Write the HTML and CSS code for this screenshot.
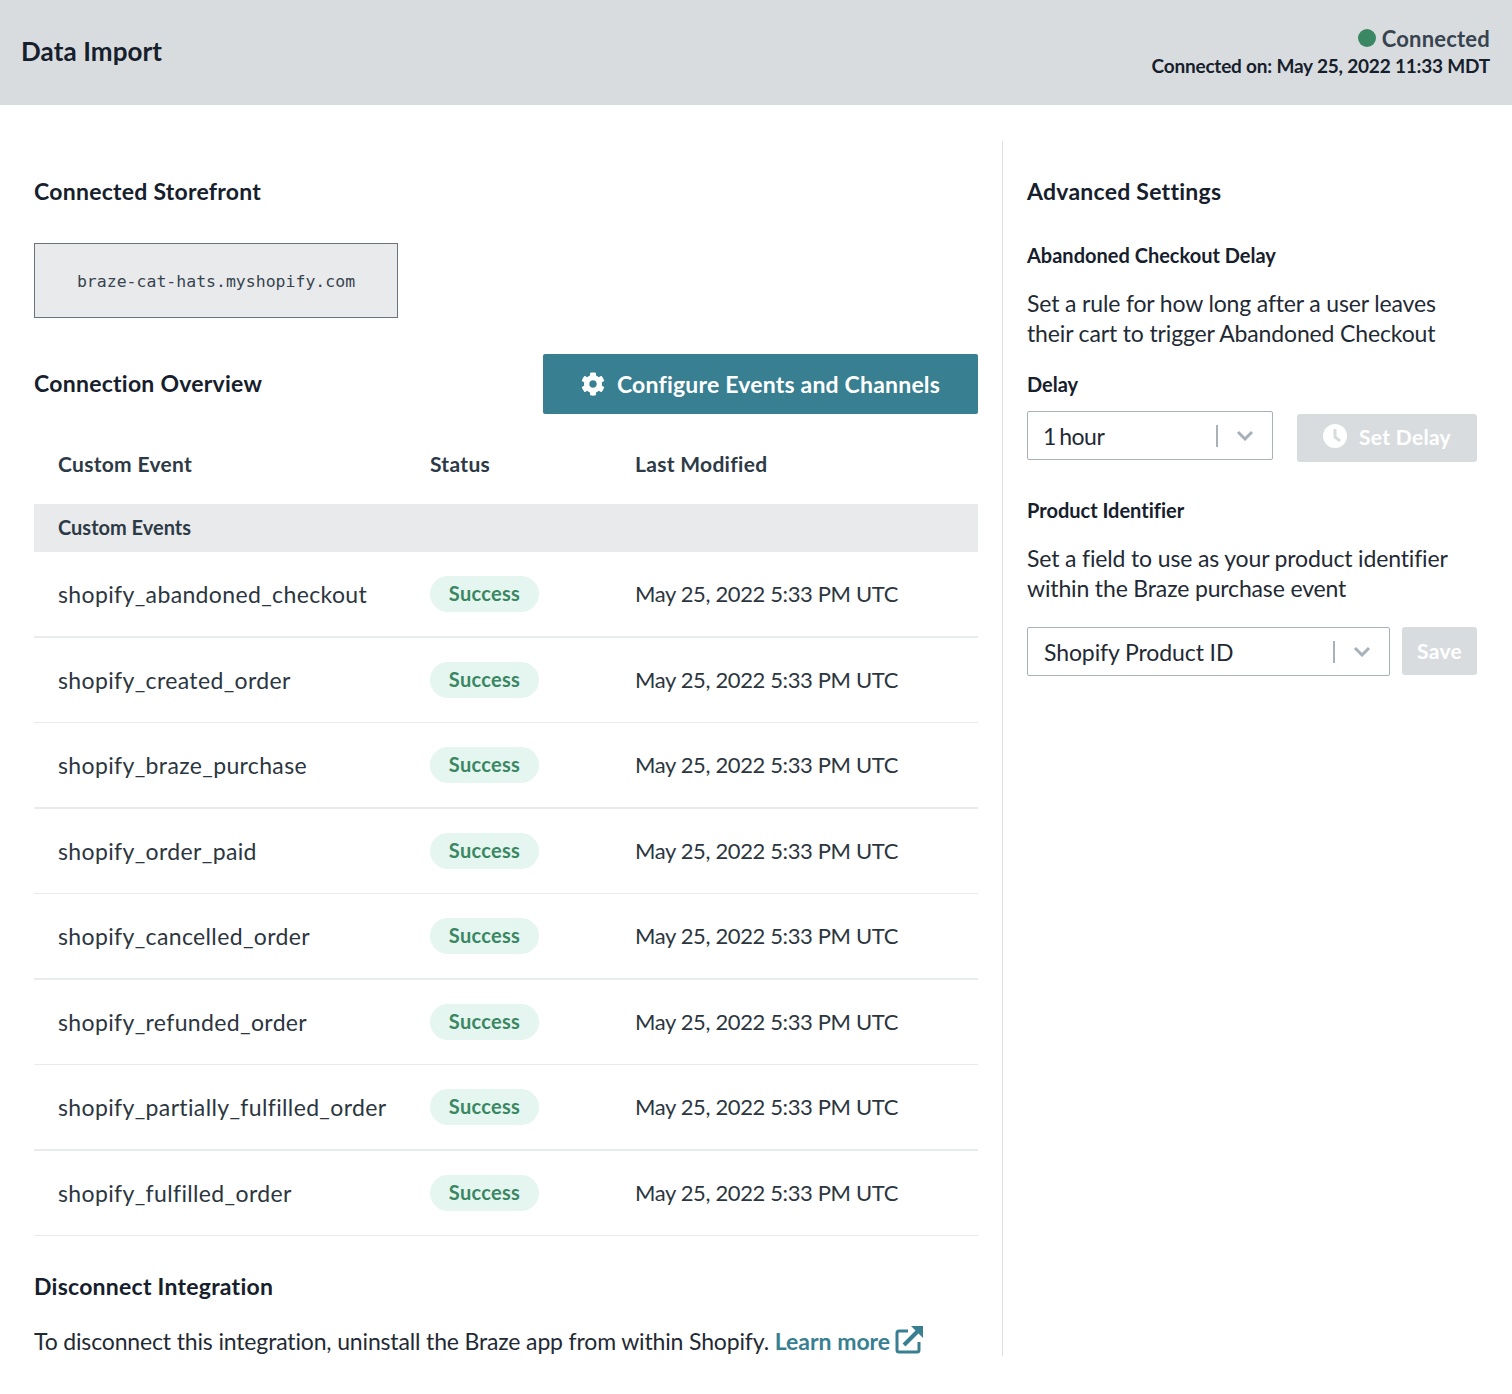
FILE: index.html

```html
<!DOCTYPE html>
<html>
<head>
    <title>Data Import</title>
    <link rel="stylesheet" href="styles.css">
</head>
<body>
    <div class="topbar">
        <h1 class="page-title">Data Import</h1>
        <div class="conn">
            <div class="conn-status"><span class="dot"></span>Connected</div>
            <div class="conn-date">Connected on: May 25, 2022 11:33 MDT</div>
        </div>
    </div>

    <div class="content">
        <div class="left">
            <h2 class="heading">Connected Storefront</h2>
            <div class="store-box">braze-cat-hats.myshopify.com</div>

            <div class="overview-head">
                <h2 class="heading">Connection Overview</h2>
                <button type="button" class="btn-primary">
                    <svg class="gear" viewBox="0 0 512 512"><path fill="#fff" d="M487.4 315.7l-42.6-24.6c4.3-23.2 4.3-47 0-70.2l42.6-24.6c4.9-2.8 7.1-8.6 5.5-14-11.1-35.6-30-67.8-54.7-94.6-3.8-4.1-10-5.1-14.8-2.3L380.8 110c-17.9-15.4-38.5-27.3-60.8-35.1V25.8c0-5.6-3.9-10.5-9.4-11.7-36.7-8.2-74.3-7.8-109.2 0-5.5 1.2-9.4 6.1-9.4 11.7V75c-22.2 7.9-42.8 19.8-60.8 35.1L88.7 85.5c-4.9-2.8-11-1.9-14.8 2.3-24.7 26.7-43.6 58.9-54.7 94.6-1.7 5.4.6 11.2 5.5 14L67.3 221c-4.3 23.2-4.3 47 0 70.2l-42.6 24.6c-4.9 2.8-7.1 8.6-5.5 14 11.1 35.6 30 67.8 54.7 94.6 3.8 4.1 10 5.1 14.8 2.3l42.6-24.6c17.9 15.4 38.5 27.3 60.8 35.1v49.2c0 5.6 3.9 10.5 9.4 11.7 36.7 8.2 74.3 7.8 109.2 0 5.5-1.2 9.4-6.1 9.4-11.7v-49.2c22.2-7.9 42.8-19.8 60.8-35.1l42.6 24.6c4.9 2.8 11 1.9 14.8-2.3 24.7-26.7 43.6-58.9 54.7-94.6 1.5-5.5-.7-11.3-5.6-14.1zM256 336c-44.1 0-80-35.9-80-80s35.9-80 80-80 80 35.9 80 80-35.9 80-80 80z"/></svg>
                    Configure Events and Channels
                </button>
            </div>

            <div class="events">
                <div class="ev-row ev-head">
                    <div>Custom Event</div>
                    <div>Status</div>
                    <div>Last Modified</div>
                </div>
                <div class="ev-group">Custom Events</div>
                <div class="ev-row">
                    <div class="ev-name">shopify_abandoned_checkout</div>
                    <div><span class="pill">Success</span></div>
                    <div class="ev-date">May 25, 2022 5:33 PM UTC</div>
                </div>
                <div class="ev-row">
                    <div class="ev-name">shopify_created_order</div>
                    <div><span class="pill">Success</span></div>
                    <div class="ev-date">May 25, 2022 5:33 PM UTC</div>
                </div>
                <div class="ev-row">
                    <div class="ev-name">shopify_braze_purchase</div>
                    <div><span class="pill">Success</span></div>
                    <div class="ev-date">May 25, 2022 5:33 PM UTC</div>
                </div>
                <div class="ev-row">
                    <div class="ev-name">shopify_order_paid</div>
                    <div><span class="pill">Success</span></div>
                    <div class="ev-date">May 25, 2022 5:33 PM UTC</div>
                </div>
                <div class="ev-row">
                    <div class="ev-name">shopify_cancelled_order</div>
                    <div><span class="pill">Success</span></div>
                    <div class="ev-date">May 25, 2022 5:33 PM UTC</div>
                </div>
                <div class="ev-row">
                    <div class="ev-name">shopify_refunded_order</div>
                    <div><span class="pill">Success</span></div>
                    <div class="ev-date">May 25, 2022 5:33 PM UTC</div>
                </div>
                <div class="ev-row">
                    <div class="ev-name">shopify_partially_fulfilled_order</div>
                    <div><span class="pill">Success</span></div>
                    <div class="ev-date">May 25, 2022 5:33 PM UTC</div>
                </div>
                <div class="ev-row">
                    <div class="ev-name">shopify_fulfilled_order</div>
                    <div><span class="pill">Success</span></div>
                    <div class="ev-date">May 25, 2022 5:33 PM UTC</div>
                </div>
            </div>

            <h2 class="heading disconnect">Disconnect Integration</h2>
            <p class="copy disconnect-text">To disconnect this integration, uninstall the Braze app from within Shopify. <a class="learn" href="#">Learn more<svg class="ext" viewBox="0 0 28 28"><path d="M13 5H4a2 2 0 0 0-2 2v17a2 2 0 0 0 2 2h18a2 2 0 0 0 2-2v-8" fill="none" stroke="#387f91" stroke-width="3"/><path d="M9 19L23 5" fill="none" stroke="#387f91" stroke-width="4"/><path d="M16 0h12v12z" fill="#387f91"/></svg></a></p>
        </div>

        <div class="right">
            <h2 class="heading">Advanced Settings</h2>

            <h3 class="sub first">Abandoned Checkout Delay</h3>
            <p class="copy">Set a rule for how long after a user leaves<br>their cart to trigger Abandoned Checkout</p>
            <div class="field-label">Delay</div>
            <div class="control-row">
                <div class="select select-delay">
                    <span class="select-value">1 hour</span>
                    <span class="select-sep"></span>
                    <svg class="chev" viewBox="0 0 18 11"><path d="M2 2l7 7 7-7" fill="none" stroke="#a9b1b8" stroke-width="3"/></svg>
                </div>
                <button type="button" class="btn-muted btn-delay">
                    <svg class="clock" viewBox="0 0 24 24"><circle cx="12" cy="12" r="12" fill="#fff"/><path d="M12 5v8l5 4" fill="none" stroke="#d9dcdf" stroke-width="3"/></svg>
                    Set Delay
                </button>
            </div>

            <h3 class="sub second">Product Identifier</h3>
            <p class="copy">Set a field to use as your product identifier<br>within the Braze purchase event</p>
            <div class="control-row row-product">
                <div class="select select-product">
                    <span class="select-value">Shopify Product ID</span>
                    <span class="select-sep"></span>
                    <svg class="chev" viewBox="0 0 18 11"><path d="M2 2l7 7 7-7" fill="none" stroke="#a9b1b8" stroke-width="3"/></svg>
                </div>
                <button type="button" class="btn-muted btn-save">Save</button>
            </div>
        </div>
    </div>
</body>
</html>
```

FILE: styles.css

```css
* {
    box-sizing: border-box;
}
body {
    margin: 0;
    background-color: #fff;
    color: #16202c;
    font-family: Lato, "Liberation Sans", sans-serif;
    font-variant-ligatures: none;
}
h1, h2, h3, p {
    margin: 0;
}

/* top bar */
.topbar {
    height: 105px;
    background-color: #d9dcdf;
    padding: 0 22px 0 21px;
    display: flex;
    justify-content: space-between;
    align-items: center;
}
.page-title {
    font-size: 26px;
    font-weight: 700;
    letter-spacing: .1px;
    margin-bottom: 3px;
}
.conn {
    text-align: right;
    font-weight: 700;
    line-height: 27px;
    margin-bottom: 2px;
}
.conn-status {
    color: #37444f;
    font-size: 22px;
    letter-spacing: .2px;
    display: flex;
    justify-content: flex-end;
    align-items: center;
    gap: 6px;
}
.conn-date {
    font-size: 19px;
    letter-spacing: -.2px;
}
.dot {
    width: 18px;
    height: 18px;
    border-radius: 50%;
    background-color: #3a8763;
}

/* columns */
.content {
    display: flex;
    padding-top: 36px;
}
.left {
    width: 1003px;
    padding: 35px 24px 0 34px;
    border-right: 1px solid #dcdee0;
}
.right {
    flex: 1;
    padding: 35px 35px 0 24px;
}
.heading {
    font-size: 23px;
    line-height: 30px;
    font-weight: 700;
    letter-spacing: .25px;
}

.store-box {
    width: 364px;
    height: 75px;
    margin: 37px 0 36px;
    padding-top: 2px;
    background-color: #e9eaec;
    border: 1px solid #69737d;
    display: flex;
    align-items: center;
    justify-content: center;
    font-family: "DejaVu Sans Mono", monospace;
    font-size: 16.5px;
    color: #37444f;
}

.overview-head {
    display: flex;
    justify-content: space-between;
    align-items: center;
}
.overview-head .heading {
    margin-bottom: 2px;
}
.btn-primary {
    width: 435px;
    height: 60px;
    border: none;
    border-radius: 2px;
    background-color: #387f91;
    color: #fff;
    font: 700 23px Lato, sans-serif;
    letter-spacing: .2px;
    display: flex;
    align-items: center;
    justify-content: center;
    gap: 12px;
}
.gear {
    width: 24px;
    height: 24px;
}

/* event table */
.events {
    font-size: 22px;
    color: #2c3640;
}
.ev-row {
    display: grid;
    grid-template-columns: 372px 205px 1fr;
    align-items: center;
    height: 85.5px;
    padding-left: 24px;
    border-bottom: 1px solid #e9eaec;
}
.ev-row:nth-child(odd):not(.ev-head) {
    border-bottom-width: 2px;
}
.ev-head {
    height: 90px;
    padding-top: 8px;
    border-bottom: none;
    font-weight: 700;
    font-size: 21px;
    letter-spacing: .3px;
    color: #2d3a46;
}
.ev-group {
    height: 48px;
    padding-left: 24px;
    background-color: #e9eaec;
    font-size: 20px;
    font-weight: 700;
    line-height: 46px;
    color: #2d3a46;
}
.ev-name {
    font-size: 23px;
    letter-spacing: .36px;
}
.ev-date {
    letter-spacing: -.37px;
    margin-bottom: 1px;
}
.pill {
    display: inline-block;
    width: 109px;
    height: 36px;
    border-radius: 18px;
    background-color: #e5f5ef;
    color: #3a8763;
    font-size: 20px;
    font-weight: 700;
    letter-spacing: .3px;
    line-height: 34px;
    text-align: center;
}

.disconnect {
    margin-top: 35px;
}
.disconnect-text {
    margin-top: 25px;
}
.copy {
    font-size: 23px;
    line-height: 30px;
    letter-spacing: -.15px;
    color: #1f2a35;
}
.learn {
    color: #387f91;
    font-weight: 700;
    letter-spacing: 0;
    text-decoration: none;
}
.ext {
    width: 28px;
    height: 28px;
    margin-left: 5px;
    vertical-align: -4px;
}

/* settings column */
.sub {
    font-size: 20px;
    line-height: 24px;
    font-weight: 700;
}
.sub.first {
    margin: 37px 0 21px;
}
.sub.second {
    margin: 36px 0 21px;
}
.field-label {
    margin: 24px 0 15px;
    font-size: 20px;
    line-height: 24px;
    font-weight: 700;
}
.control-row {
    display: flex;
    align-items: flex-start;
    justify-content: space-between;
}
.row-product {
    margin-top: 24px;
}
.select {
    height: 49px;
    border: 1px solid #a9b1b8;
    border-radius: 2px;
    display: flex;
    align-items: center;
    font-size: 23px;
    letter-spacing: -.1px;
    color: #1f2a35;
}
.select-delay {
    width: 246px;
    padding: 0 18px 0 15px;
    letter-spacing: -.5px;
    word-spacing: -2px;
}
.select-product {
    width: 363px;
    padding: 0 18px 0 16px;
}
.select-value {
    flex: 1;
}
.select-sep {
    width: 2px;
    height: 22px;
    background-color: #a9b1b8;
    margin-right: 18px;
}
.chev {
    width: 18px;
    height: 11px;
}
.btn-muted {
    border: none;
    border-radius: 3px;
    background-color: #d9dcdf;
    color: #fff;
    font: 700 21px Lato, sans-serif;
    letter-spacing: .3px;
    display: flex;
    align-items: center;
    justify-content: center;
    height: 48px;
}
.btn-delay {
    width: 180px;
    margin-top: 3px;
    padding-bottom: 5px;
    gap: 12px;
}
.btn-save {
    width: 75px;
    padding-bottom: 3px;
}
.clock {
    width: 24px;
    height: 24px;
}
```
